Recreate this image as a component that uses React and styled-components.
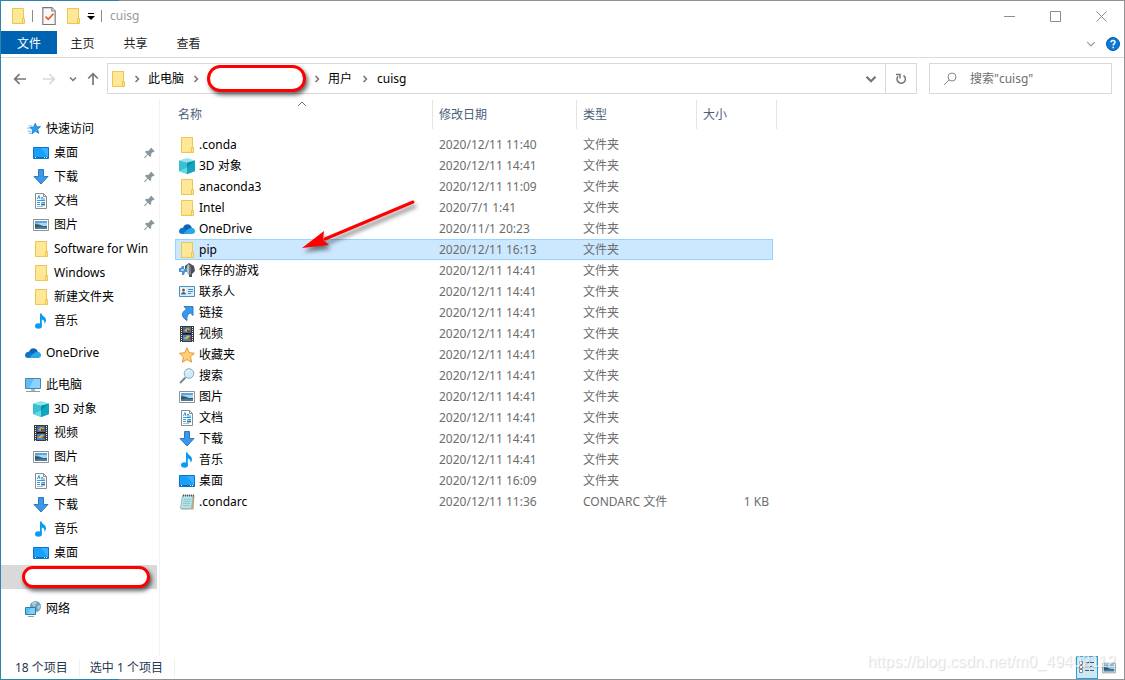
import { useState } from 'react';
import styled, { createGlobalStyle } from 'styled-components';

const GlobalStyle = createGlobalStyle`
  * {
    box-sizing: border-box;
  }

  body {
    margin: 0;
    background: #fff;
  }

  body, button, input, table {
    font-family: "Noto Sans", "Noto Sans CJK SC", sans-serif;
    font-size: 12px;
    line-height: 18px;
    color: #000;
  }

  button {
    border: none;
    background: none;
    padding: 0;
  }
`;

const WindowFrame = styled.div`
  display: flex;
  min-height: 100vh;
  padding: 1px;
  background: linear-gradient(90deg, #2b86a8 119px, #929292 119px);
`;

const WindowBody = styled.div`
  position: relative;
  flex: 1;
  min-width: 0;
  display: flex;
  flex-direction: column;
  background: #fff;
`;

const TitleBar = styled.header`
  display: flex;
  align-items: center;
  height: 30px;
  padding-left: 9px;
`;

const QuickTools = styled.div`
  display: flex;
  align-items: center;
  gap: 6px;
`;

const QuickButton = styled.button`
  display: flex;
  padding: 0 ${props => props.$pad || 0}px;
`;

const Divider = styled.span`
  width: 1px;
  height: 12px;
  background: #8c8c8c;
`;

const WindowTitle = styled.h1`
  flex: 1;
  margin: 0 0 0 8px;
  font-size: 12px;
  font-weight: 400;
  line-height: 18px;
  color: #999;
`;

const WindowButton = styled.button`
  width: 46px;
  height: 30px;
  display: flex;
  align-items: center;
  justify-content: center;
`;

const Ribbon = styled.nav`
  display: flex;
  align-items: center;
  height: 27px;
  padding-bottom: 3px;
  border-bottom: 1px solid #dadbdc;
`;

const RibbonTab = styled.button`
  width: ${props => (props.$file ? '56px' : '53px')};
  height: 23px;
  padding: 2px ${props => (props.$file ? 0 : 2)}px 0 0;
  background: ${props => (props.$file ? '#0063b1' : 'transparent')};
  color: ${props => (props.$file ? '#fff' : '#262626')};
`;

const RibbonEnd = styled.div`
  display: flex;
  align-items: center;
  gap: 10px;
  margin-left: auto;
  padding: 2px 4px 0 0;
`;

const IconButton = styled.button`
  flex: none;
  display: flex;
  align-items: center;
  justify-content: center;
  width: ${props => props.$width || 16}px;
`;

const AddressRow = styled.div`
  display: flex;
  align-items: center;
  height: 41px;
  padding-right: 12px;
`;

const NavButtons = styled.div`
  display: flex;
  align-items: center;
  width: 106px;
  padding-left: 8px;
`;

const AddressBar = styled.div`
  flex: 1;
  min-width: 0;
  display: flex;
  align-items: center;
  height: 31px;
  border: 1px solid #d9d9d9;
  padding-left: 2px;
`;

const Crumb = styled.button`
  white-space: nowrap;
`;

const CrumbArrow = styled.span`
  display: flex;
  justify-content: center;
  width: ${props => props.$width || 25}px;
`;

const RedPill = styled.span`
  flex: none;
  width: ${props => props.$width}px;
  height: ${props => props.$height}px;
  border: 3px solid #fe0000;
  border-radius: 14px;
  background: #fff;
  box-shadow: 2px 3px 4px rgba(0, 0, 0, 0.6);
`;

const AddressEnd = styled.div`
  display: flex;
  align-self: stretch;
  margin-left: auto;

  button + button {
    border-left: 1px solid #d9d9d9;
  }
`;

const SearchBox = styled.label`
  display: flex;
  align-items: center;
  gap: 13px;
  width: 183px;
  height: 31px;
  margin-left: 12px;
  padding-left: 13px;
  border: 1px solid #d9d9d9;
`;

const SearchInput = styled.input`
  flex: 1;
  min-width: 0;
  padding: 0;
  border: none;
  outline: none;

  &::placeholder {
    color: #6d6d6d;
    opacity: 1;
  }
`;

const Content = styled.div`
  flex: 1;
  display: flex;
  min-height: 0;
`;

const Sidebar = styled.nav`
  flex: none;
  width: 159px;
  padding-top: 18px;
  border-right: 1px solid #f3f3f3;
`;

const TreeGroup = styled.ul`
  margin: 0 0 8px;
  padding: 0;
  list-style: none;
`;

const TreeLink = styled.a`
  display: flex;
  align-items: center;
  gap: ${props => (props.$masked ? 0 : 5)}px;
  height: 24px;
  margin-right: ${props => (props.$masked ? 2 : 4)}px;
  padding-left: ${props => (props.$masked ? 21 : props.$nested ? 32 : 24)}px;
  background: ${props => (props.$masked ? '#d9d9d9' : 'transparent')};
  color: #000;
  text-decoration: none;
  white-space: nowrap;

  svg {
    flex: none;
  }
`;

const PinSlot = styled.span`
  display: flex;
  margin-left: auto;
`;

const Main = styled.main`
  flex: 1;
  min-width: 0;
  padding: 1px 0 0 15px;
`;

const FileTable = styled.table`
  width: 598px;
  table-layout: fixed;
  border-collapse: collapse;
`;

const HeadCell = styled.th`
  position: relative;
  width: ${props => props.$width}px;
  height: 34px;
  padding: 0 0 5px;
  vertical-align: top;
  font-weight: 400;
  text-align: left;
  color: #4c607a;
`;

const HeadLabel = styled.div`
  display: flex;
  align-items: center;
  height: 29px;
  padding-left: ${props => (props.$first ? 3 : 6)}px;
  margin-right: ${props => (props.$last ? -4 : 0)}px;
  border-right: 1px solid #e5e5e5;
`;

const SortMark = styled.span`
  position: absolute;
  top: 0;
  left: 0;
  right: 4px;
  display: flex;
  justify-content: center;
`;

const FileRow = styled.tr`
  height: 21px;
  background: ${props => (props.$selected ? '#cce8ff' : 'transparent')};
  outline: ${props => (props.$selected ? '1px solid #99d1ff' : 'none')};
  outline-offset: -1px;
`;

const Cell = styled.td`
  height: 21px;
  padding: 0 4px 0 6px;
  color: #6d6d6d;
  text-align: ${props => (props.$right ? 'right' : 'left')};
  white-space: nowrap;
`;

const NameCell = styled.td`
  position: relative;
  padding: 0 0 0 4px;
`;

const FileName = styled.div`
  display: flex;
  align-items: center;
  gap: 4px;
  height: 21px;
`;

const Pointer = styled.svg`
  position: absolute;
  left: 120px;
  top: -45px;
  z-index: 1;
  filter: drop-shadow(2px 4px 2px rgba(0, 0, 0, 0.5));
`;

const StatusBar = styled.footer`
  display: flex;
  align-items: center;
  height: 23px;
  padding: 0 4px 0 14px;
  color: #26374f;
`;

const StatusText = styled.span`
  margin-right: 10px;
  padding-right: 11px;
  border-right: 1px solid #f0f0f0;
`;

const ViewButtons = styled.div`
  display: flex;
  align-self: stretch;
  margin-left: auto;
`;

const ViewButton = styled.button`
  display: flex;
  align-items: center;
  justify-content: center;
  width: 22px;
  border: 1px solid ${props => (props.$active ? '#26a0da' : 'transparent')};
  background: ${props => (props.$active ? '#cbe8f6' : 'transparent')};
`;

const Watermark = styled.div`
  position: absolute;
  right: 8px;
  bottom: 6px;
  font-family: "Liberation Sans", sans-serif;
  font-size: 16px;
  line-height: 22px;
  color: rgba(255, 255, 255, 0.7);
  text-shadow: 1px 1px 1px rgba(0, 0, 0, 0.15);
  pointer-events: none;
`;

const iconShapes = {
  folder: (
    <>
      <path d="M2.500.5h11v10h1v5h-12z" fill="#ffe48f" />
      <path d="M3 1h10v13H3z" fill="#ffe798" />
      <path d="M2.500 15.500V.5h11v10.200M2.500 15.500h12v-5h-2v5" fill="none" stroke="#ecc64f" />
    </>
  ),
  star: (
    <g transform="translate(2 1) scale(0.87)">
      <path d="M9.500 1.500l1.600 4 4.400-.1-3.400 3 1.500 4.600-4.100-2.300-3.800 3 .9-4.700-3.300-2.600 4.400-.6z" fill="#2e9df0" stroke="#1b7fc9" />
      <path d="M2 4.500h4M0 7h3M1 10.500h4M2 13h3" stroke="#57aef0" />
    </g>
  ),
  desktop: (
    <>
      <path d="M.5 2.500h15v11H.5z" fill="#18a0fb" stroke="#0b74c4" />
      <path d="M8 3h7v9z" fill="#3cb1ff" />
      <path d="M1 12.500h14" stroke="#0f6cb0" />
      <path d="M2 12.500h1M11 12.500h1M13 12.500h1" stroke="#fff" />
    </>
  ),
  download: (
    <path d="M5.500.5h5v7h4.500L8 15 1 7.500h4.500z" fill="#3b97e8" stroke="#2b78c4" />
  ),
  document: (
    <>
      <path d="M2.500.5h8l3 3v12h-11z" fill="#fff" stroke="#8b8b8b" />
      <path d="M10.500.5v3h3" fill="none" stroke="#8b8b8b" />
      <path d="M4.500 6L6 2.500 7 6M8 4.500h2M4 7.500h8M8 6h4M4 9.500h3M8.500 9.500h3.500M4 11.500h3" fill="none" stroke="#2f9ae0" />
      <path d="M8 10.500h4v2H8z" fill="#3d7aa0" />
      <path d="M4 13.500h6" stroke="#9dc4dd" />
    </>
  ),
  picture: (
    <>
      <path d="M.5 2.500h15v11H.5z" fill="#fff" stroke="#8f9396" />
      <path d="M2 4h12v8H2z" fill="#a8d8f5" />
      <path d="M2 4h12v2H6L2 7z" fill="#5fa4dc" />
      <path d="M2 7l4 .5 4 1.500h4v2H2z" fill="#2f5b53" />
      <path d="M2 10.500l5-1 7 .5v2H2z" fill="#4c7ca6" />
    </>
  ),
  music: (
    <>
      <path d="M7 .5h1.600c.3 2.700 4.400 3.300 4.400 6.700 0 1.300-.5 2.600-1.500 3.500.4-2.500-.7-3.600-2.700-4.200v6.300H7z" fill="#0a9bf5" />
      <ellipse cx="5.500" cy="13" rx="3.500" ry="2.700" fill="#0a9bf5" />
    </>
  ),
  onedrive: (
    <>
      <path d="M4 7c.7-4 6.300-5.200 8.200-1.500L14 9H3z" fill="#0f63b8" />
      <path d="M0 10.500c0-3 3-4.500 5.500-3.200L12 13H3.500C1.500 13 0 12.200 0 10.500z" fill="#1173c9" />
      <path d="M8 9c1.600-1.900 3.500-2.500 5.200-1.900C15 7.300 16 8.800 16 10.300c0 1.700-1.200 2.700-3 2.700H4z" fill="#28a8ea" />
    </>
  ),
  computer: (
    <>
      <path d="M.5 1.500h15v10H.5z" fill="#5ebcf7" stroke="#4b87ad" />
      <path d="M9 2h6v9H4z" fill="#8ad2ff" />
      <path d="M6 12h4v2H6z" fill="#a5b8c4" />
      <path d="M1 14.500h14" stroke="#8a9aa6" />
    </>
  ),
  cube: (
    <>
      <path d="M8 0l8 2.500-8 2-8-2z" fill="#8be6ef" />
      <path d="M0 2.500l8 2V16l-8-3z" fill="#38bfd2" />
      <path d="M8 4.500l8-2V13l-8 3z" fill="#0790ad" />
      <path d="M0 13l8-3.500V16z" fill="#66d8e4" />
      <path d="M8 9.500l8-7V13l-8 3z" fill="#12a5c0" />
    </>
  ),
  video: (
    <>
      <path d="M1 0h14v16H1z" fill="#3b3b3b" />
      <path d="M2.500 1v15M13.500 1v15" stroke="#eee" strokeDasharray="1 1" />
      <path d="M4 1h8v6H4z" fill="#3c6fb0" />
      <path d="M4 9h8v6H4z" fill="#3f82d0" />
      <path d="M5 5l3-3 3 1-2 3zM4 13l3-2 2-2 2 2-3 2z" fill="#e2b52f" />
      <path d="M8 3l3 2v1H8zM9 12l3-1v3z" fill="#8d3d2a" />
      <path d="M4 7.500h8" stroke="#161616" />
    </>
  ),
  network: (
    <>
      <circle cx="10.500" cy="5.500" r="5.500" fill="#6b9fb8" />
      <path d="M7 2c2-2 5-1 5 0s-2 1-2 3-3 1-3-3zM12 5l3-1c1 2 0 4-2 5z" fill="#a9cbd6" />
      <path d="M.5 6.500h10v7H.5z" fill="#59bff4" stroke="#3b789f" />
      <path d="M6 7h4v6H3z" fill="#7dd0fb" />
      <path d="M3 15.500h6" stroke="#8b9eaa" />
    </>
  ),
  games: (
    <>
      <path d="M6 3l4-3 5 3 1 5-3 3v3h-3v-4L6 8z" fill="#4a5158" />
      <path d="M9 1l2 2-1 9h-1L7 7z" fill="#b9c2c9" />
      <path d="M10 3l2 1v8h-2z" fill="#747d85" />
      <path d="M0 5h2l1-2h2v3h3v3H6l-1 3H3V9H0z" fill="#4b93cf" />
      <path d="M2 6h3v2H2z" fill="#a1d0f2" />
    </>
  ),
  contacts: (
    <>
      <path d="M.5 2.500h15v10H.5z" fill="#dceefb" stroke="#4a91bd" />
      <path d="M2 4h5v7H2z" fill="#fff" />
      <circle cx="4.500" cy="6" r="1.500" fill="#785444" />
      <path d="M2 10.500c0-3.500 5-3.500 5 0z" fill="#2e6a8c" />
      <path d="M9 5.500h5M9 7.500h5M9 9.500h3" stroke="#3d8fc4" />
    </>
  ),
  link: (
    <path d="M5 1.500h9v9l-2.800-2.700C8.500 9.500 7.500 11.500 8 15.500 2 12 2 7.500 7.500 4.200z" fill="#3b97e8" stroke="#2b7fcb" />
  ),
  favorite: (
    <path d="M8 .8l2.200 4.900 5.200.6-3.900 3.600 1.100 5.300L8 12.500l-4.600 2.700 1.100-5.300L.6 6.300l5.200-.6z" fill="#ffd078" stroke="#e8963a" />
  ),
  search: (
    <>
      <path d="M6.500 9.500L1 15" stroke="#7d8790" strokeWidth="2" />
      <circle cx="10" cy="5.500" r="4.800" fill="#cdeafb" stroke="#8fa8b8" />
      <path d="M7 5c.5-2 2-3 4-2.500" stroke="#fff" fill="none" />
    </>
  ),
  notepad: (
    <>
      <path d="M4 2h11.500l-1 13.500H2z" fill="#c2a66c" />
      <path d="M3.500 1.500H14L12.500 14.500h-11z" fill="#b9e2e8" stroke="#8fbcc5" />
      <path d="M5 5.500h7M4.500 7.500h7M4 9.500h7M4 11.500h6.500" stroke="#93c6ce" />
      <path d="M4 1.500h11" stroke="#555" strokeWidth="2" strokeDasharray="1 1" />
    </>
  ),
  pin: (
    <path d="M11 1l4.500 4.500-1.200 1.200-1-.2-2.500 2.500.2 2.800-1.500 1.500-3-3L2.500 14.500l-1.300.3.300-1.300 4.200-4-3-3L4.200 5l2.800.2 2.500-2.500-.1-.8z" fill="#8b979f" />
  ),
  checklist: (
    <>
      <path d="M2.500.5h8l3 3v12h-11z" fill="#f8f8f8" stroke="#777" />
      <path d="M10.500.5v3h3" fill="#ddd" stroke="#888" />
      <path d="M5 8.500l2.300 2.500L12 6" fill="none" stroke="#e8592b" strokeWidth="1.500" />
    </>
  ),
};

const Icon = ({ name, size = 16 }) => (
  <svg width={size} height={size} viewBox="0 0 16 16" aria-hidden="true">
    {iconShapes[name]}
  </svg>
);

const Chevron = ({ dir = 'down', size = 8, color = '#757575', weight = 1.5 }) => {
  const paths = {
    down: 'M1 2.500l3 3 3-3',
    up: 'M0 6l4-4 4 4',
    right: 'M2.500 1l3 3-3 3',
  };
  return (
    <svg width={size} height={size} viewBox="0 0 8 8" fill="none" stroke={color} strokeWidth={weight} aria-hidden="true">
      <path d={paths[dir]} />
    </svg>
  );
};

const Arrow = ({ color = '#777', rotate = 0 }) => (
  <svg width="14" height="14" viewBox="0 0 14 14" fill="none" stroke={color} strokeWidth="1.700" aria-hidden="true">
    <path d="M13 7H2M6.500 2.200L1.700 7l4.800 4.800" transform={`rotate(${rotate} 7 7)`} />
  </svg>
);

const treeGroups = [
  [
    { label: '快速访问', icon: 'star' },
    { label: '桌面', icon: 'desktop', nested: true, pinned: true },
    { label: '下载', icon: 'download', nested: true, pinned: true },
    { label: '文档', icon: 'document', nested: true, pinned: true },
    { label: '图片', icon: 'picture', nested: true, pinned: true },
    { label: 'Software for Win', icon: 'folder', nested: true },
    { label: 'Windows', icon: 'folder', nested: true },
    { label: '新建文件夹', icon: 'folder', nested: true },
    { label: '音乐', icon: 'music', nested: true },
  ],
  [{ label: 'OneDrive', icon: 'onedrive' }],
  [
    { label: '此电脑', icon: 'computer' },
    { label: '3D 对象', icon: 'cube', nested: true },
    { label: '视频', icon: 'video', nested: true },
    { label: '图片', icon: 'picture', nested: true },
    { label: '文档', icon: 'document', nested: true },
    { label: '下载', icon: 'download', nested: true },
    { label: '音乐', icon: 'music', nested: true },
    { label: '桌面', icon: 'desktop', nested: true },
    { masked: true },
  ],
  [{ label: '网络', icon: 'network' }],
];

const files = [
  { name: '.conda', icon: 'folder', date: '2020/12/11 11:40' },
  { name: '3D 对象', icon: 'cube', date: '2020/12/11 14:41' },
  { name: 'anaconda3', icon: 'folder', date: '2020/12/11 11:09' },
  { name: 'Intel', icon: 'folder', date: '2020/7/1 1:41' },
  { name: 'OneDrive', icon: 'onedrive', date: '2020/11/1 20:23' },
  { name: 'pip', icon: 'folder', date: '2020/12/11 16:13' },
  { name: '保存的游戏', icon: 'games', date: '2020/12/11 14:41' },
  { name: '联系人', icon: 'contacts', date: '2020/12/11 14:41' },
  { name: '链接', icon: 'link', date: '2020/12/11 14:41' },
  { name: '视频', icon: 'video', date: '2020/12/11 14:41' },
  { name: '收藏夹', icon: 'favorite', date: '2020/12/11 14:41' },
  { name: '搜索', icon: 'search', date: '2020/12/11 14:41' },
  { name: '图片', icon: 'picture', date: '2020/12/11 14:41' },
  { name: '文档', icon: 'document', date: '2020/12/11 14:41' },
  { name: '下载', icon: 'download', date: '2020/12/11 14:41' },
  { name: '音乐', icon: 'music', date: '2020/12/11 14:41' },
  { name: '桌面', icon: 'desktop', date: '2020/12/11 16:09' },
  { name: '.condarc', icon: 'notepad', date: '2020/12/11 11:36', type: 'CONDARC 文件', size: '1 KB' },
];

const App = () => {
  const [selected, setSelected] = useState('pip');
  const [query, setQuery] = useState('');

  return (
    <>
      <GlobalStyle />
      <WindowFrame>
        <WindowBody>
          <TitleBar>
            <QuickTools>
              <Icon name="folder" />
              <Divider />
              <QuickButton $pad={1} aria-label="属性"><Icon name="checklist" size={18} /></QuickButton>
              <QuickButton aria-label="新建文件夹"><Icon name="folder" /></QuickButton>
              <QuickButton aria-label="自定义快速访问工具栏">
                <svg width="8" height="8" viewBox="0 0 8 8" aria-hidden="true">
                  <path d="M1 1h6v1H1zM0 4h8L4 8z" fill="#000" />
                </svg>
              </QuickButton>
              <Divider />
            </QuickTools>
            <WindowTitle>cuisg</WindowTitle>
            <WindowButton aria-label="最小化">
              <svg width="11" height="11" stroke="#8c8c8c"><path d="M0 5.500h11" /></svg>
            </WindowButton>
            <WindowButton aria-label="最大化">
              <svg width="11" height="11" stroke="#8c8c8c" fill="none"><path d="M.5.5h10v10H.5z" /></svg>
            </WindowButton>
            <WindowButton aria-label="关闭">
              <svg width="11" height="11" stroke="#8c8c8c"><path d="M.5.5l10 10M10.500.5l-10 10" /></svg>
            </WindowButton>
          </TitleBar>

          <Ribbon>
            <RibbonTab $file>文件</RibbonTab>
            <RibbonTab>主页</RibbonTab>
            <RibbonTab>共享</RibbonTab>
            <RibbonTab>查看</RibbonTab>
            <RibbonEnd>
              <IconButton $width={10} aria-label="展开功能区">
                <Chevron size={10} color="#999" weight={1} />
              </IconButton>
              <IconButton $width={14} aria-label="帮助">
                <svg width="14" height="14" viewBox="0 0 14 14" fill="none">
                  <circle cx="7" cy="7" r="6.500" fill="#0a78d6" stroke="#075ca8" />
                  <path d="M5 5.300c0-2.500 4-2.500 4-.2C9 6.700 7.200 6.500 7.200 8.500" stroke="#fff" strokeWidth="1.500" />
                  <path d="M7.200 9.800v1.500" stroke="#fff" strokeWidth="1.500" />
                </svg>
              </IconButton>
            </RibbonEnd>
          </Ribbon>

          <AddressRow>
            <NavButtons>
              <IconButton $width={22} aria-label="后退"><Arrow /></IconButton>
              <IconButton $width={36} aria-label="前进"><Arrow color="#d9d9d9" rotate={180} /></IconButton>
              <IconButton $width={12} aria-label="最近浏览的位置"><Chevron /></IconButton>
              <IconButton $width={28} aria-label="上移"><Arrow rotate={90} /></IconButton>
            </NavButtons>
            <AddressBar>
              <Icon name="folder" />
              <CrumbArrow $width={22}><Chevron dir="right" /></CrumbArrow>
              <Crumb>此电脑</Crumb>
              <CrumbArrow $width={23}><Chevron dir="right" /></CrumbArrow>
              <RedPill $width={99} $height={27} />
              <CrumbArrow $width={22}><Chevron dir="right" /></CrumbArrow>
              <Crumb>用户</Crumb>
              <CrumbArrow><Chevron dir="right" /></CrumbArrow>
              <Crumb>cuisg</Crumb>
              <AddressEnd>
                <IconButton $width={28} aria-label="以前的位置"><Chevron size={12} /></IconButton>
                <IconButton $width={31} aria-label="刷新">
                  <svg width="12" height="12" viewBox="0 0 12 12" fill="none" stroke="#757575" strokeWidth="1.500">
                    <path d="M8.500 2.500A4.200 4.200 0 1 1 3 3.300" />
                    <path d="M1 1.500h4v4" />
                  </svg>
                </IconButton>
              </AddressEnd>
            </AddressBar>
            <SearchBox>
              <svg width="14" height="14" viewBox="0 0 14 14" fill="none" stroke="#888" aria-hidden="true">
                <circle cx="9" cy="5" r="4" />
                <path d="M6.200 7.800L1 13" />
              </svg>
              <SearchInput
                type="text"
                aria-label="搜索"
                placeholder={'搜索"cuisg"'}
                value={query}
                onChange={(e) => setQuery(e.target.value)}
              />
            </SearchBox>
          </AddressRow>

          <Content>
            <Sidebar>
              {treeGroups.map((group, index) => (
                <TreeGroup key={index}>
                  {group.map(item => (
                    <li key={item.label || 'masked'}>
                      <TreeLink href="#" $nested={item.nested} $masked={item.masked}>
                        {item.masked ? (
                          <RedPill $width={128} $height={22} />
                        ) : (
                          <>
                            <Icon name={item.icon} />
                            {item.label}
                          </>
                        )}
                        {item.pinned && <PinSlot><Icon name="pin" size={12} /></PinSlot>}
                      </TreeLink>
                    </li>
                  ))}
                </TreeGroup>
              ))}
            </Sidebar>

            <Main>
              <FileTable>
                <thead>
                  <tr>
                    <HeadCell $width={258}>
                      <HeadLabel $first>名称</HeadLabel>
                      <SortMark><Chevron dir="up" weight={1} /></SortMark>
                    </HeadCell>
                    <HeadCell $width={144}><HeadLabel>修改日期</HeadLabel></HeadCell>
                    <HeadCell $width={120}><HeadLabel>类型</HeadLabel></HeadCell>
                    <HeadCell $width={76}><HeadLabel $last>大小</HeadLabel></HeadCell>
                  </tr>
                </thead>
                <tbody>
                  {files.map(file => (
                    <FileRow
                      key={file.name}
                      $selected={file.name === selected}
                      onClick={() => setSelected(file.name)}
                    >
                      <NameCell>
                        <FileName>
                          <Icon name={file.icon} />
                          {file.name}
                        </FileName>
                        {file.name === 'pip' && (
                          <Pointer width="125" height="60" aria-hidden="true">
                            <path d="M118 8L30 45" stroke="#fe0000" strokeWidth="3" strokeLinecap="round" />
                            <path d="M7 54l22-17-1 9 6 5z" fill="#fe0000" />
                          </Pointer>
                        )}
                      </NameCell>
                      <Cell>{file.date}</Cell>
                      <Cell>{file.type || '文件夹'}</Cell>
                      <Cell $right>{file.size}</Cell>
                    </FileRow>
                  ))}
                </tbody>
              </FileTable>
            </Main>
          </Content>

          <StatusBar>
            <StatusText>18 个项目</StatusText>
            <StatusText>选中 1 个项目</StatusText>
            <ViewButtons>
              <ViewButton $active aria-label="详细信息">
                <svg width="16" height="15" viewBox="0 0 16 15" fill="none">
                  <path d="M.5 1.500h3v3h-3zM.5 5.500h3v3h-3zM.5 9.500h3v3h-3z" fill="#fff" stroke="#888" />
                  <path d="M6 2.500h4M11 2.500h4M6 6.500h4M11 6.500h4M6 10.500h4M11 10.500h4" stroke="#555" />
                </svg>
              </ViewButton>
              <ViewButton aria-label="大缩略图"><Icon name="picture" size={14} /></ViewButton>
            </ViewButtons>
          </StatusBar>
          <Watermark>https://blog.csdn.net/m0_49402112</Watermark>
        </WindowBody>
      </WindowFrame>
    </>
  );
};

export default App;
